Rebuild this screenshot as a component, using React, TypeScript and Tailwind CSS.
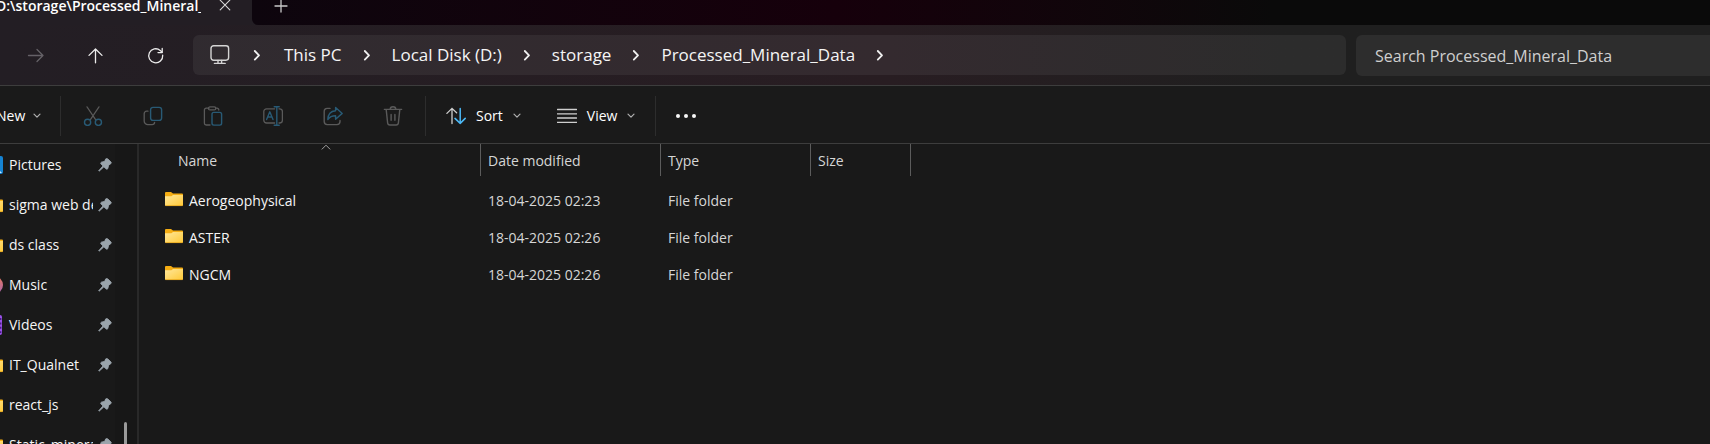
import type { ReactNode } from "react";

type IconProps = { className?: string };

const GREY = "#5a5a5a";
const TEAL = "#285a75";

function Svg({ size = 20, className = "", children }: { size?: number; className?: string; children: ReactNode }) {
  return (
    <svg
      width={size}
      height={size}
      viewBox={`0 0 ${size} ${size}`}
      fill="none"
      strokeLinecap="round"
      strokeLinejoin="round"
      aria-hidden="true"
      className={`shrink-0 ${className}`}
    >
      {children}
    </svg>
  );
}

const CloseIcon = () => (
  <Svg size={12}>
    <path d="M1.2 0.2L10.8 9.8M10.8 0.2L1.2 9.8" stroke="#d9d9d9" strokeWidth="1.1" />
  </Svg>
);

const PlusIcon = () => (
  <Svg size={14}>
    <path d="M7 0V12M1 6H13" stroke="#c9c9c9" strokeWidth="1.3" />
  </Svg>
);

const ArrowRight = () => (
  <Svg size={18}>
    <path d="M1.5 9.5H16M10 3.5L16 9.5L10 15.5" stroke="#656167" strokeWidth="1.3" />
  </Svg>
);

const ArrowUp = () => (
  <Svg size={18}>
    <path d="M8.5 16.8V3M2 9.4L8.5 3L15 9.4" stroke="#ececec" strokeWidth="1.3" />
  </Svg>
);

const RefreshIcon = () => (
  <Svg size={18}>
    <path d="M15.7 9.2A7 7 0 1 1 13.2 4.4L15 6.2" stroke="#ececec" strokeWidth="1.3" />
    <path d="M15.2 2.4V6.6H11" stroke="#ececec" strokeWidth="1.3" />
  </Svg>
);

const MonitorIcon = () => (
  <Svg size={20}>
    <rect x="1" y="0.8" width="17.6" height="14.4" rx="2.6" stroke="#d4d4d4" strokeWidth="1.4" />
    <path d="M8 15.5V18.2M11.6 15.5V18.2M4.4 18.4H15.2" stroke="#d4d4d4" strokeWidth="1.4" />
  </Svg>
);

const Chevron = () => (
  <svg width="8" height="12" viewBox="0 0 8 12" fill="none" strokeLinecap="round" strokeLinejoin="round" aria-hidden="true" className="shrink-0">
    <path d="M1.8 2L6 6.3L1.8 10.6" stroke="#f0f0f0" strokeWidth="1.8" />
  </svg>
);

const ChevronDown = () => (
  <svg width="8" height="6" viewBox="0 0 8 6" fill="none" strokeLinecap="round" strokeLinejoin="round" aria-hidden="true" className="shrink-0">
    <path d="M1 1.2L4 4.2L7 1.2" stroke="#b0b0b0" strokeWidth="1.2" />
  </svg>
);

const CutIcon = () => (
  <Svg>
    <path d="M4 0.8L12.6 13.6M16 0.8L7.4 13.6" stroke={GREY} strokeWidth="1.2" />
    <circle cx="4.6" cy="16.3" r="3.1" stroke={TEAL} strokeWidth="1.4" />
    <circle cx="15.4" cy="16.3" r="3.1" stroke={TEAL} strokeWidth="1.4" />
  </Svg>
);

const CopyIcon = () => (
  <Svg>
    <path d="M5 5.2H3.6A2.4 2.4 0 0 0 1.2 7.6V15A3.6 3.6 0 0 0 4.8 18.6H9.2A2.4 2.4 0 0 0 11.6 16.4" stroke={GREY} strokeWidth="1.3" />
    <rect x="7.6" y="1.4" width="11" height="13" rx="2.4" stroke={TEAL} strokeWidth="1.4" />
  </Svg>
);

const PasteIcon = () => (
  <Svg>
    <path d="M6 2.2H3.2A1.8 1.8 0 0 0 1.4 4V17.2A1.8 1.8 0 0 0 3.2 19H7M12.6 2.2H14A1.8 1.8 0 0 1 15.8 4" stroke={GREY} strokeWidth="1.3" />
    <rect x="5.4" y="0.9" width="7.4" height="3" rx="1.5" stroke={GREY} strokeWidth="1.3" />
    <rect x="9" y="6.4" width="9.6" height="12.7" rx="1.8" stroke={TEAL} strokeWidth="1.4" />
  </Svg>
);

const RenameIcon = () => (
  <Svg>
    <path d="M11.6 2.8H3.6A2.8 2.8 0 0 0 0.8 5.6V14.2A2.8 2.8 0 0 0 3.6 17H11.6M16 2.8H16.6A2.8 2.8 0 0 1 19.4 5.6V14.2A2.8 2.8 0 0 1 16.6 17H16" stroke={GREY} strokeWidth="1.3" />
    <path d="M3.6 13.6L6.8 5.8L10 13.6M4.8 11H8.8" stroke={TEAL} strokeWidth="1.4" />
    <path d="M13.8 0.8V19.2M11.2 0.8H16.2M11.2 19.2H16.2" stroke={TEAL} strokeWidth="1.4" />
  </Svg>
);

const ShareIcon = () => (
  <Svg>
    <path d="M7 2.4H4.2A3 3 0 0 0 1.2 5.4V15.6A3 3 0 0 0 4.2 18.6H14A3 3 0 0 0 17 15.6V14.4" stroke={GREY} strokeWidth="1.4" />
    <path d="M12.6 1.4L19.2 7.4L12.6 13.2V9.8C8.6 9.8 6.6 11 4.8 13.6C5 8.4 8 5.2 12.6 4.8Z" stroke={TEAL} strokeWidth="1.4" />
  </Svg>
);

const TrashIcon = () => (
  <Svg>
    <path d="M1.4 3.4H18.6M7.2 3.2A2.8 2.4 0 0 1 12.8 3.2M3.2 3.6L4.6 16.8A2.4 2.4 0 0 0 7 19H13A2.4 2.4 0 0 0 15.4 16.8L16.8 3.6M8.1 8.4V14.2M11.9 8.4V14.2" stroke={GREY} strokeWidth="1.4" />
  </Svg>
);

const SortIcon = () => (
  <Svg>
    <path d="M6 17.5V2.4M0.9 7.4L6 2.4L10.6 6.8" stroke="#cfcfcf" strokeWidth="1.3" />
    <path d="M14.2 2.4V17.4M9 12.4L14.2 17.4L19.2 12.4" stroke="#4cb8f5" strokeWidth="1.5" />
  </Svg>
);

const ViewIcon = () => (
  <Svg>
    <path d="M0.5 3.5H19.5M0.5 7.8H19.5M0.5 12H19.5M0.5 16.3H19.5" stroke="#cfcfcf" strokeWidth="1.3" />
  </Svg>
);

const MoreIcon = () => (
  <Svg>
    <circle cx="2" cy="10" r="2" fill="#f8f8f8" />
    <circle cx="10" cy="10" r="2" fill="#f8f8f8" />
    <circle cx="18" cy="10" r="2" fill="#f8f8f8" />
  </Svg>
);

const PinIcon = () => (
  <Svg size={14}>
    <path
      d="M7.9 0.8Q8.9 0.1 9.8 0.9L13 4.1Q13.6 5 12.8 5.7L10.6 7.2L9.8 10.6Q9.2 11.6 8.2 10.9L5.9 8.8L1.1 13.2L0.7 12.8L5 7.9L2.9 5.8Q2.3 4.7 3.4 4.2L6.5 3.4Z"
      fill="#9aa4ab"
      stroke="#9aa4ab"
      strokeWidth="0.9"
    />
  </Svg>
);

const FolderIcon = ({ className = "" }: IconProps) => (
  <svg width="18" height="15" viewBox="0 0 18 15" aria-hidden="true" className={`shrink-0 ${className}`}>
    <defs>
      <linearGradient id="folder" x1="0" y1="0" x2="1" y2="1">
        <stop offset="0" stopColor="#ffe79b" />
        <stop offset="1" stopColor="#ffc937" />
      </linearGradient>
    </defs>
    <path d="M0 1Q0 0 1 0H6L8 1.5H17Q18 1.5 18 2.5V8H0Z" fill="#f5ad13" />
    <path d="M0 4.2H6.4L8 3H18V12.9Q18 13.9 17 13.9H1Q0 13.9 0 12.9Z" fill="url(#folder)" />
    <path d="M0.5 13.6H17.5" stroke="#e5a51c" strokeWidth="0.8" />
  </svg>
);

const PicturesIcon = () => (
  <Svg size={18}>
    <rect width="18" height="18" rx="2" fill="#1583d3" />
    <path d="M1 17L9 9L17 17Z" fill="#c9e9fb" />
  </Svg>
);

const MusicIcon = () => (
  <Svg size={18}>
    <defs>
      <linearGradient id="music" x1="0" y1="0" x2="0" y2="1">
        <stop offset="0" stopColor="#e5765a" />
        <stop offset="1" stopColor="#a967b4" />
      </linearGradient>
    </defs>
    <circle cx="9" cy="9" r="9" fill="url(#music)" />
  </Svg>
);

const VideosIcon = () => (
  <Svg size={20}>
    <rect width="17" height="20" rx="2" fill="#9a52e8" />
    <path d="M15.6 3V18" stroke="#4a1f86" strokeWidth="1.6" strokeLinecap="butt" strokeDasharray="2 2.4" />
  </Svg>
);

const crumbs = ["This PC", "Local Disk (D:)", "storage", "Processed_Mineral_Data"];

const fileActions = [
  { label: "Cut", icon: <CutIcon /> },
  { label: "Copy", icon: <CopyIcon /> },
  { label: "Paste", icon: <PasteIcon /> },
  { label: "Rename", icon: <RenameIcon /> },
  { label: "Share", icon: <ShareIcon /> },
  { label: "Delete", icon: <TrashIcon /> },
];

const pinned = [
  { name: "Pictures", icon: <PicturesIcon /> },
  { name: "sigma web dev", icon: <FolderIcon /> },
  { name: "ds class", icon: <FolderIcon /> },
  { name: "Music", icon: <MusicIcon /> },
  { name: "Videos", icon: <VideosIcon /> },
  { name: "IT_Qualnet", icon: <FolderIcon /> },
  { name: "react_js", icon: <FolderIcon /> },
  { name: "Static_minerals", icon: <FolderIcon /> },
];

const files = [
  { name: "Aerogeophysical", modified: "18-04-2025 02:23" },
  { name: "ASTER", modified: "18-04-2025 02:26" },
  { name: "NGCM", modified: "18-04-2025 02:26" },
];

function TabStrip() {
  return (
    <div className="flex h-[25px] bg-[#231e24]">
      <div className="flex w-[252px] shrink-0">
        <span className="-ml-1 w-[205px] overflow-hidden text-[14px] leading-3 font-semibold whitespace-nowrap text-white">
          D:\storage\Processed_Mineral_Data
        </span>
        <button type="button" aria-label="Close tab" className="ml-[18px] flex h-3 w-3">
          <CloseIcon />
        </button>
      </div>
      <div className="flex flex-1 rounded-bl-md bg-linear-to-r from-[#0d050d] via-[#16000b] via-40% to-[#0a0a0a] to-70%">
        <button type="button" aria-label="New tab" className="ml-[22px] flex h-[14px] w-[14px]">
          <PlusIcon />
        </button>
      </div>
    </div>
  );
}

function NavBar() {
  return (
    <div className="flex h-[61px] items-start border-b border-[#3d3d3d] bg-linear-to-r from-[#231e24] via-[#281d22] via-52% to-[#1f1f1f] to-75% pt-[10px]">
      <div className="flex h-10 w-[193px] shrink-0 items-center gap-[42px] pl-[27px]">
        <button type="button" aria-label="Forward" disabled><ArrowRight /></button>
        <button type="button" aria-label="Up"><ArrowUp /></button>
        <button type="button" aria-label="Refresh"><RefreshIcon /></button>
      </div>
      <nav aria-label="Address" className="flex h-10 flex-1 items-center gap-[23px] rounded-md bg-white/6 pl-[17px]">
        <button type="button" aria-label="Location"><MonitorIcon /></button>
        <Chevron />
        <div className="flex items-center gap-[21px]">
          {crumbs.map((crumb) => (
            <span key={crumb} className="flex items-center gap-[21px]">
              <a href="#" className="text-[17px] leading-6 whitespace-nowrap text-[#f5f5f5]">{crumb}</a>
              <Chevron />
            </span>
          ))}
        </div>
      </nav>
      <input
        type="search"
        aria-label="Search Processed_Mineral_Data"
        placeholder="Search Processed_Mineral_Data"
        className="ml-[10px] h-[41px] w-[354px] rounded-l-md bg-[#2d2d2d] pl-[19px] text-[16px] text-white outline-none placeholder:text-[#cfcfcf]"
      />
    </div>
  );
}

function Toolbar() {
  return (
    <div className="flex h-[58px] items-center border-b border-[#3d3d3d] bg-[#1a1a1a] pt-[2px] text-[14px] text-white">
      <button type="button" className="-ml-1 flex w-16 items-center gap-2">
        New <ChevronDown />
      </button>
      <div className="flex h-10 items-center gap-10 border-x border-[#2d2d2d] px-[22px]">
        {fileActions.map((action) => (
          <button key={action.label} type="button" aria-label={action.label} disabled>
            {action.icon}
          </button>
        ))}
      </div>
      <div className="flex h-10 items-center gap-9 border-r border-[#2d2d2d] px-5">
        <button type="button" className="flex items-center gap-[10px]"><SortIcon /> Sort <ChevronDown /></button>
        <button type="button" className="flex items-center gap-[10px]"><ViewIcon /> View <ChevronDown /></button>
      </div>
      <button type="button" aria-label="More options" className="ml-5"><MoreIcon /></button>
    </div>
  );
}

function Sidebar() {
  return (
    <aside className="flex w-[139px] shrink-0 overflow-hidden border-r-2 border-[#292929] bg-[#191919]">
      <ul className="w-[115px] pt-px">
        {pinned.map((item) => (
          <li key={item.name} className="-ml-[15px] flex h-10 items-center">
            <a href="#" className="flex w-[108px] items-center gap-[6px] overflow-hidden text-[14px] leading-5 whitespace-nowrap text-[#f5f5f5]">
              <span className="flex w-[18px] shrink-0">{item.icon}</span>
              {item.name}
            </a>
            <span className="ml-[5px] flex"><PinIcon /></span>
          </li>
        ))}
      </ul>
      <div className="flex-1 bg-[#171717] pt-[278px] pl-[9px]">
        <div className="h-16 w-[3px] rounded-full bg-[#9a9a9a]" />
      </div>
    </aside>
  );
}

function FileTable() {
  const head = "relative h-[38px] p-0 align-top font-normal";
  const label = "block h-8 border-r border-[#5c5c5c] pt-px pl-[7px] leading-8";
  return (
    <main className="flex-1 bg-[#191919] pl-[2px]">
      <table className="w-[770px] table-fixed border-collapse text-left text-[14px] text-[#d6d6d6]">
        <thead>
          <tr>
            <th className={`${head} w-[340px]`}>
              <span className="block h-8 border-r border-[#5c5c5c] pt-px pl-[37px] leading-8">Name</span>
              <svg width="10" height="6" viewBox="0 0 10 6" fill="none" aria-hidden="true" className="absolute top-0 left-[180px]">
                <path d="M0.8 5.4L5 1.2L9.2 5.4" stroke="#a0a0a0" />
              </svg>
            </th>
            <th className={`${head} w-[180px]`}><span className={label}>Date modified</span></th>
            <th className={`${head} w-[150px]`}><span className={label}>Type</span></th>
            <th className={`${head} w-[100px]`}><span className={label}>Size</span></th>
          </tr>
        </thead>
        <tbody>
          {files.map((file) => (
            <tr key={file.name} className="h-[37px]">
              <td className="p-0 pl-6">
                <a href="#" className="flex items-center gap-[6px] text-[#f5f5f5]">
                  <FolderIcon className="-mt-[2px]" />
                  {file.name}
                </a>
              </td>
              <td className="p-0 pl-[7px]">{file.modified}</td>
              <td className="p-0 pl-[7px]">File folder</td>
              <td className="p-0" />
            </tr>
          ))}
        </tbody>
      </table>
    </main>
  );
}

export default function App() {
  return (
    <div className="flex h-screen flex-col overflow-hidden bg-[#191919] font-['Open_Sans','Noto_Sans',sans-serif]">
      <TabStrip />
      <NavBar />
      <Toolbar />
      <div className="flex min-h-0 flex-1">
        <Sidebar />
        <FileTable />
      </div>
    </div>
  );
}
